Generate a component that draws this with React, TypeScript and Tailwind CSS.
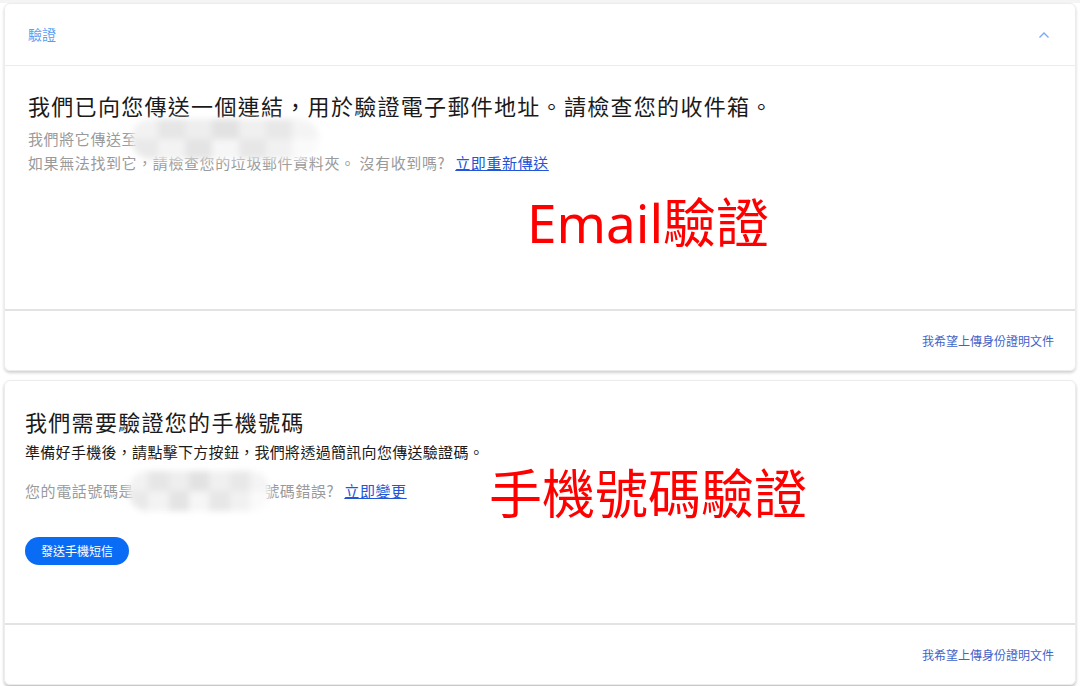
import React from "react";

const font = { fontFamily: '"Noto Sans CJK TC", "Noto Sans", sans-serif' };
const latin = { fontFamily: '"Noto Sans", "Noto Sans CJK TC", sans-serif' };

function Blur({ w }: { w: number }) {
  return (
    <span className="relative inline-block align-middle" style={{ width: w, height: 20 }}>
      <span className="absolute -top-[12px] -left-[6px] -right-[6px] -bottom-[8px] flex flex-col overflow-hidden rounded-full blur-[3px]">
        <span className="flex flex-1">
          <span className="flex-1 bg-[#f2f2f2]" />
          <span className="flex-1 bg-[#e6e6e6]" />
          <span className="flex-1 bg-[#eeeeee]" />
          <span className="flex-1 bg-[#e2e2e2]" />
          <span className="flex-1 bg-[#f0f0f0]" />
          <span className="flex-1 bg-[#e8e8e8]" />
          <span className="flex-1 bg-[#f4f4f4]" />
        </span>
        <span className="flex flex-1">
          <span className="flex-1 bg-[#e9e9e9]" />
          <span className="flex-1 bg-[#f3f3f3]" />
          <span className="flex-1 bg-[#e4e4e4]" />
          <span className="flex-1 bg-[#f6f6f6]" />
          <span className="flex-1 bg-[#e7e7e7]" />
          <span className="flex-1 bg-[#f1f1f1]" />
          <span className="flex-1 bg-[#fafafa]" />
        </span>
      </span>
    </span>
  );
}

function Footer() {
  return (
    <div className="h-[61px] border-t-2 border-[#e3e3e3] flex items-center justify-end pr-[21px]">
      <a href="#" className="text-[12px] text-[#3f63c9]">我希望上傳身份證明文件</a>
    </div>
  );
}

export default function App() {
  return (
    <div className="min-h-[686px] bg-white text-[#222]" style={font}>
      <div className="h-[3px] bg-[#f4f4f4]" />

      {/* Email card */}
      <div className="relative mx-[4px] rounded-md border border-[#ececec] shadow-[0_2px_3px_rgba(0,0,0,0.18)]">
        <div className="h-[62px] flex items-center justify-between px-[23px] border-b border-[#ececec]">
          <span className="text-[14px] text-[#5a9cf2]">驗證</span>
          <svg width="12" height="8" viewBox="0 0 12 8" className="mr-[2px]">
            <path d="M1.5 6.5 L6 2 L10.5 6.5" fill="none" stroke="#7aaaf5" strokeWidth="1.4" />
          </svg>
        </div>
        <div className="h-[243px] px-[23px] pt-[24px]">
          <h2 className="text-[22px] leading-[30px] text-[#1a1a1a] tracking-[1.3px]">
            我們已向您傳送一個連結，用於驗證電子郵件地址。請檢查您的收件箱。
          </h2>
          <div className="mt-[7px] text-[15px] leading-[23px] text-[#9a9a9a] tracking-[0.6px]">
            <p>
              我們將它傳送至<Blur w={176} />
            </p>
            <p>
              如果無法找到它，請檢查您的垃圾郵件資料夾。 沒有收到嗎?{" "}
              <a href="#" className="ml-[6px] text-[#2255d8] underline">立即重新傳送</a>
            </p>
          </div>
        </div>
        <Footer />
        <span className="absolute left-[522px] top-[189px] text-[53px] leading-[60px] text-[#ff0000]" style={latin}>
          Email驗證
        </span>
      </div>

      {/* Phone card */}
      <div className="relative mx-[4px] mt-[9px] rounded-md border border-[#ececec] shadow-[0_2px_3px_rgba(0,0,0,0.25)]">
        <div className="h-[242px] px-[20px] pt-[25px]">
          <h2 className="text-[22px] leading-[30px] text-[#1a1a1a] tracking-[1.3px]">
            我們需要驗證您的手機號碼
          </h2>
          <p className="mt-[5px] text-[15px] leading-[22px] text-[#1a1a1a] tracking-[0.3px]">
            準備好手機後，請點擊下方按鈕，我們將透過簡訊向您傳送驗證碼。
          </p>
          <p className="mt-[17px] text-[15px] leading-[22px] text-[#9a9a9a] tracking-[0.6px]">
            您的電話號碼是<Blur w={130} />號碼錯誤?{" "}
            <a href="#" className="ml-[6px] text-[#2255d8] underline">立即變更</a>
          </p>
          <button className="mt-[34px] h-[28px] px-[16px] rounded-full bg-[#0a6cf5] text-white text-[12px]">
            發送手機短信
          </button>
        </div>
        <Footer />
        <span className="absolute left-[484px] top-[80px] text-[53px] leading-[60px] text-[#ff0000]">
          手機號碼驗證
        </span>
      </div>
    </div>
  );
}
